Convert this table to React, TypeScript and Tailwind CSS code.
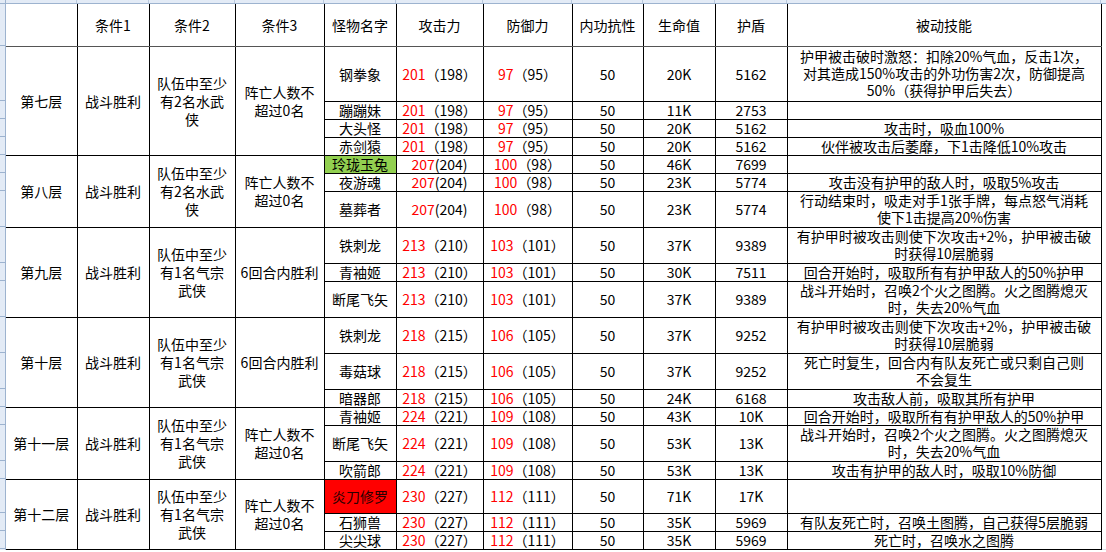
type Monster = {
  name: string;
  atk: [string, string];
  def: [string, string];
  res: string;
  hp: string;
  shield: string;
  skill: string[];
  h: number;
  bg?: "green" | "red";
};

type Layer = {
  title: string;
  cond1: string;
  cond2: string[];
  cond3: string[];
  monsters: Monster[];
};

const cols = [71, 72, 86, 89, 72, 87, 89, 71, 72, 72, 314];

const water = ["队伍中至少", "有2名水武", "侠"];
const qizong = ["队伍中至少", "有1名气宗", "武侠"];
const noDeath = ["阵亡人数不", "超过0名"];
const sixRounds = ["6回合内胜利"];

const armorBreak = ["有护甲时被攻击则使下次攻击+2%，护甲被击破", "时获得10层脆弱"];
const fireTotem = ["战斗开始时，召唤2个火之图腾。火之图腾熄灭", "时，失去20%气血"];
const drainArmor = ["回合开始时，吸取所有有护甲敌人的50%护甲"];

const layers: Layer[] = [
  {
    title: "第七层",
    cond1: "战斗胜利",
    cond2: water,
    cond3: noDeath,
    monsters: [
      {
        name: "钢拳象", atk: ["201", "（198）"], def: ["97", "（95）"], res: "50", hp: "20K", shield: "5162", h: 55,
        skill: ["护甲被击破时激怒：扣除20%气血，反击1次，", "对其造成150%攻击的外功伤害2次，防御提高", "50%（获得护甲后失去）"],
      },
      { name: "蹦蹦妹", atk: ["201", "（198）"], def: ["97", "（95）"], res: "50", hp: "11K", shield: "2753", h: 18, skill: [] },
      { name: "大头怪", atk: ["201", "（198）"], def: ["97", "（95）"], res: "50", hp: "20K", shield: "5162", h: 18, skill: ["攻击时，吸血100%"] },
      { name: "赤剑猿", atk: ["201", "（198）"], def: ["97", "（95）"], res: "50", hp: "20K", shield: "5162", h: 18, skill: ["伙伴被攻击后萎靡，下1击降低10%攻击"] },
    ],
  },
  {
    title: "第八层",
    cond1: "战斗胜利",
    cond2: water,
    cond3: noDeath,
    monsters: [
      { name: "玲珑玉兔", bg: "green", atk: ["207", "(204)"], def: ["100", "（98）"], res: "50", hp: "46K", shield: "7699", h: 18, skill: [] },
      { name: "夜游魂", atk: ["207", "(204)"], def: ["100", "（98）"], res: "50", hp: "23K", shield: "5774", h: 18, skill: ["攻击没有护甲的敌人时，吸取5%攻击"] },
      {
        name: "墓葬者", atk: ["207", "(204)"], def: ["100", "（98）"], res: "50", hp: "23K", shield: "5774", h: 36,
        skill: ["行动结束时，吸走对手1张手牌，每点怒气消耗", "使下1击提高20%伤害"],
      },
    ],
  },
  {
    title: "第九层",
    cond1: "战斗胜利",
    cond2: qizong,
    cond3: sixRounds,
    monsters: [
      { name: "铁刺龙", atk: ["213", "（210）"], def: ["103", "（101）"], res: "50", hp: "37K", shield: "9389", h: 36, skill: armorBreak },
      { name: "青袖姬", atk: ["213", "（210）"], def: ["103", "（101）"], res: "50", hp: "30K", shield: "7511", h: 18, skill: drainArmor },
      { name: "断尾飞矢", atk: ["213", "（210）"], def: ["103", "（101）"], res: "50", hp: "37K", shield: "9389", h: 36, skill: fireTotem },
    ],
  },
  {
    title: "第十层",
    cond1: "战斗胜利",
    cond2: qizong,
    cond3: sixRounds,
    monsters: [
      { name: "铁刺龙", atk: ["218", "（215）"], def: ["106", "（105）"], res: "50", hp: "37K", shield: "9252", h: 36, skill: armorBreak },
      {
        name: "毒菇球", atk: ["218", "（215）"], def: ["106", "（105）"], res: "50", hp: "37K", shield: "9252", h: 36,
        skill: ["死亡时复生，回合内有队友死亡或只剩自己则", "不会复生"],
      },
      { name: "暗器郎", atk: ["218", "（215）"], def: ["106", "（105）"], res: "50", hp: "24K", shield: "6168", h: 18, skill: ["攻击敌人前，吸取其所有护甲"] },
    ],
  },
  {
    title: "第十一层",
    cond1: "战斗胜利",
    cond2: qizong,
    cond3: noDeath,
    monsters: [
      { name: "青袖姬", atk: ["224", "（221）"], def: ["109", "（108）"], res: "50", hp: "43K", shield: "10K", h: 18, skill: drainArmor },
      { name: "断尾飞矢", atk: ["224", "（221）"], def: ["109", "（108）"], res: "50", hp: "53K", shield: "13K", h: 36, skill: fireTotem },
      { name: "吹箭郎", atk: ["224", "（221）"], def: ["109", "（108）"], res: "50", hp: "53K", shield: "13K", h: 18, skill: ["攻击有护甲的敌人时，吸取10%防御"] },
    ],
  },
  {
    title: "第十二层",
    cond1: "战斗胜利",
    cond2: qizong,
    cond3: noDeath,
    monsters: [
      { name: "炎刀修罗", bg: "red", atk: ["230", "（227）"], def: ["112", "（111）"], res: "50", hp: "71K", shield: "17K", h: 34, skill: [] },
      { name: "石狮兽", atk: ["230", "（227）"], def: ["112", "（111）"], res: "50", hp: "35K", shield: "5969", h: 18, skill: ["有队友死亡时，召唤土图腾，自己获得5层脆弱"] },
      { name: "尖尖球", atk: ["230", "（227）"], def: ["112", "（111）"], res: "50", hp: "35K", shield: "5969", h: 18, skill: ["死亡时，召唤水之图腾"] },
    ],
  },
];

const rowHeights = [42, ...layers.flatMap((l) => l.monsters.map((m) => m.h))];

const cell = "border border-black text-center align-middle p-0 leading-[16px] whitespace-nowrap overflow-hidden";

function Lines({ lines, lh = "leading-[16px]" }: { lines: string[]; lh?: string }) {
  return (
    <>
      {lines.map((t, i) => (
        <div key={i} className={lh}>
          {t}
        </div>
      ))}
    </>
  );
}

function Stat({ v }: { v: [string, string] }) {
  return (
    <>
      <span className="text-[#ff0000]">{v[0]}</span>
      <span>{v[1]}</span>
    </>
  );
}

export default function App() {
  return (
    <div
      className="w-[1106px] h-[552px] overflow-hidden bg-white text-black text-[14px]"
      style={{ fontFamily: '"Noto Sans CJK SC", "Noto Sans", sans-serif' }}
    >
      {/* column header strip, scrolled almost out of view */}
      <div className="flex h-[4px] bg-[#e3ebf6] border-b border-[#9db3cf] overflow-hidden">
        <div className="w-[6px] shrink-0 border-r border-[#9db3cf]" />
        {cols.map((w, i) => (
          <div key={i} className="shrink-0 border-r border-[#b9c9de]" style={{ width: w }} />
        ))}
      </div>

      <div className="flex">
        {/* row header strip */}
        <div className="w-[6px] shrink-0 bg-[#e3ebf6] border-r border-[#9db3cf] flex flex-col">
          {rowHeights.map((h, i) => (
            <div key={i} className="shrink-0 border-b border-[#9db3cf]" style={{ height: h }} />
          ))}
        </div>

        <table className="table-fixed border-collapse w-[1095px] shrink-0">
          <colgroup>
            {cols.map((w, i) => (
              <col key={i} style={{ width: w }} />
            ))}
          </colgroup>
          <tbody>
            <tr className="h-[42px]">
              <td className={`${cell} border-t-0 border-l-0 border-b-[#555]`} />
              {["条件1", "条件2", "条件3", "怪物名字", "攻击力", "防御力", "内功抗性", "生命值", "护盾", "被动技能"].map((t) => (
                <td key={t} className={`${cell} border-t-0 border-b-[#555]`}>
                  {t}
                </td>
              ))}
            </tr>
            {layers.map((layer) =>
              layer.monsters.map((m, i) => (
                <tr key={layer.title + m.name} style={{ height: m.h }}>
                  {i === 0 && (
                    <>
                      <td rowSpan={layer.monsters.length} className={`${cell} border-l-0`}>
                        {layer.title}
                      </td>
                      <td rowSpan={layer.monsters.length} className={cell}>
                        {layer.cond1}
                      </td>
                      <td rowSpan={layer.monsters.length} className={cell}>
                        <Lines lines={layer.cond2} lh="leading-[18px]" />
                      </td>
                      <td rowSpan={layer.monsters.length} className={cell}>
                        <Lines lines={layer.cond3} lh="leading-[18px]" />
                      </td>
                    </>
                  )}
                  <td
                    className={`${cell} ${
                      m.bg === "green" ? "bg-[#92d050]" : m.bg === "red" ? "bg-[#ff0000] text-[#2a0000]" : ""
                    }`}
                  >
                    {m.name}
                  </td>
                  <td className={cell}>
                    <Stat v={m.atk} />
                  </td>
                  <td className={cell}>
                    <Stat v={m.def} />
                  </td>
                  <td className={cell}>{m.res}</td>
                  <td className={cell}>{m.hp}</td>
                  <td className={cell}>{m.shield}</td>
                  <td className={cell}>
                    <Lines lines={m.skill} lh={m.skill.length > 1 ? "leading-[17px]" : "leading-[16px]"} />
                  </td>
                </tr>
              ))
            )}
          </tbody>
        </table>

        <div className="flex-1 border-b border-[#d4dbe6]" />
      </div>
    </div>
  );
}
